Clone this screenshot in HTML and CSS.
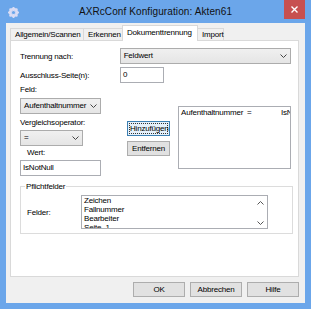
FILE: index.html
```html
<!DOCTYPE html>
<html lang="de">
<head>
    <meta charset="UTF-8">
    <title>AXRcConf Konfiguration: Akten61</title>
    <link rel="stylesheet" href="styles.css">
</head>
<body>
    <div class="window">
        <div class="titlebar">
            <svg class="app-icon" width="11" height="11" viewBox="0 0 11 11">
                <circle cx="5.5" cy="5.5" r="3.6" fill="none" stroke="#d9dcf4" stroke-width="2.2"/>
                <g stroke="#d9dcf4" stroke-width="1.8">
                    <line x1="5.5" y1="0" x2="5.5" y2="11"/>
                    <line x1="0" y1="5.5" x2="11" y2="5.5"/>
                    <line x1="1.6" y1="1.6" x2="9.4" y2="9.4"/>
                    <line x1="9.4" y1="1.6" x2="1.6" y2="9.4"/>
                </g>
                <circle cx="5.5" cy="5.5" r="1.6" fill="#6ba6ea"/>
            </svg>
            <div class="title">AXRcConf Konfiguration: Akten61</div>
            <div class="close">
                <svg width="7" height="7" viewBox="0 0 7 7"><path d="M0.5 0.5 L6.5 6.5 M6.5 0.5 L0.5 6.5" stroke="#fff" stroke-width="1.4"/></svg>
            </div>
        </div>

        <div class="client">
            <div class="tabs">
                <div class="tab tab-1">Allgemein/Scannen</div>
                <div class="tab tab-2">Erkennen</div>
                <div class="tab active">Dokumenttrennung</div>
                <div class="tab tab-4">Import</div>
            </div>

            <div class="panel">
                <div class="row">
                    <span class="lbl">Trennung nach:</span>
                    <div class="combo combo-wide">Feldwert<svg class="chev" width="7" height="4" viewBox="0 0 7 4"><path d="M0.5 0.5 L3.5 3.5 L6.5 0.5" fill="none" stroke="#444" stroke-width="1"/></svg></div>
                </div>
                <div class="row row-2">
                    <span class="lbl">Ausschluss-Seite(n):</span>
                    <div class="input input-small">0</div>
                </div>

                <div class="middle">
                    <div class="left-col">
                        <span class="lbl">Feld:</span>
                        <div class="combo combo-field">Aufenthaltnummer<svg class="chev" width="7" height="4" viewBox="0 0 7 4"><path d="M0.5 0.5 L3.5 3.5 L6.5 0.5" fill="none" stroke="#444" stroke-width="1"/></svg></div>
                        <span class="lbl lbl-op">Vergleichsoperator:</span>
                        <div class="combo combo-op">=<svg class="chev" width="7" height="4" viewBox="0 0 7 4"><path d="M0.5 0.5 L3.5 3.5 L6.5 0.5" fill="none" stroke="#444" stroke-width="1"/></svg></div>
                        <span class="lbl lbl-wert">Wert:</span>
                        <div class="input input-wert">IsNotNull</div>
                    </div>
                    <div class="btn-col">
                        <button class="btn btn-focus"><span class="focus-ring">Hinzufügen</span></button>
                        <button class="btn">Entfernen</button>
                    </div>
                    <div class="list cond-list">
                        <div class="cond-row"><span class="c1">Aufenthaltnummer</span><span class="c2">=</span><span class="c3">IsNotNull</span></div>
                    </div>
                </div>

                <div class="group">
                    <span class="legend">Pflichtfelder</span>
                    <span class="lbl lbl-felder">Felder:</span>
                    <div class="list field-list">
                        <div class="items">
                            <div>Zeichen</div>
                            <div>Fallnummer</div>
                            <div>Bearbeiter</div>
                            <div>Seite_1</div>
                        </div>
                        <div class="scroll">
                            <svg width="7" height="4" viewBox="0 0 7 4"><path d="M0.5 3.5 L3.5 0.5 L6.5 3.5" fill="none" stroke="#555" stroke-width="1"/></svg>
                            <svg width="7" height="4" viewBox="0 0 7 4"><path d="M0.5 0.5 L3.5 3.5 L6.5 0.5" fill="none" stroke="#555" stroke-width="1"/></svg>
                        </div>
                    </div>
                </div>
            </div>

            <div class="footer">
                <button class="btn btn-foot">OK</button>
                <button class="btn btn-foot">Abbrechen</button>
                <button class="btn btn-foot">Hilfe</button>
            </div>
        </div>
    </div>
</body>
</html>
```

FILE: styles.css
```css
* {
    margin: 0;
    padding: 0;
    box-sizing: border-box;
}
body {
    width: 311px;
    height: 309px;
    overflow: hidden;
    font-family: 'Liberation Sans', Arial, sans-serif;
    font-size: 8px;
    letter-spacing: -0.2px;
    color: #000;
}
.window {
    width: 311px;
    height: 309px;
    background: #6ba6ea;
    padding: 0 6px 6px 6px;
    display: flex;
    flex-direction: column;
}
.titlebar {
    height: 23px;
    display: flex;
    align-items: flex-start;
    position: relative;
}
.app-icon {
    margin: 7px 0 0 2px;
}
.title {
    position: absolute;
    left: -6px;
    right: -6px;
    top: 6px;
    text-align: center;
    font-size: 10px;
    letter-spacing: 0.1px;
    color: #111;
}
.close {
    margin-left: auto;
    width: 21px;
    height: 19px;
    background: #c75050;
    display: flex;
    justify-content: center;
    align-items: center;
    position: relative;
}
.client {
    flex: 1;
    background: #f0f0f0;
    padding: 3px 6px 6px 4px;
    display: flex;
    flex-direction: column;
}
.tabs {
    display: flex;
    align-items: flex-end;
    height: 14px;
    position: relative;
    z-index: 1;
}
.tab {
    height: 12px;
    line-height: 11px;
    padding: 0 4px;
    background: #f0f0f0;
    border: 1px solid #d9d9d9;
    border-bottom: none;
    margin-right: -1px;
    white-space: nowrap;
}
.tab-1 { width: 74px; }
.tab-2 { width: 41px; }
.tab-4 { width: 27px; }
.tab.active {
    width: 76px;
    height: 16px;
    line-height: 14px;
    background: #fff;
    margin: 0 -1px -1px -1px;
    z-index: 2;
}
.panel {
    height: 237px;
    background: #fff;
    border: 1px solid #d9d9d9;
    padding: 7px 7px 0 9px;
}
.row {
    display: flex;
    align-items: center;
}
.row-2 {
    margin-top: 3px;
}
.lbl {
    display: block;
    width: 100px;
    line-height: 11px;
    white-space: nowrap;
}
.combo {
    height: 16px;
    border: 1px solid #acacac;
    background: linear-gradient(#f0f0f0, #e5e5e5);
    padding: 0 3px;
    line-height: 14px;
    display: flex;
    align-items: center;
    white-space: nowrap;
}
.chev {
    margin-left: auto;
    flex-shrink: 0;
}
.combo-wide {
    width: 172px;
}
.input {
    height: 16px;
    border: 1px solid #abadb3;
    background: #fff;
    padding: 0 2px;
    line-height: 14px;
}
.input-small {
    width: 44px;
}
.middle {
    display: flex;
    align-items: flex-start;
    margin-top: 1px;
}
.left-col {
    width: 81px;
    display: flex;
    flex-direction: column;
}
.left-col .lbl {
    width: auto;
}
.combo-field {
    width: 81px;
    margin-top: 3px;
}
.lbl-op {
    margin-top: 3px;
}
.combo-op {
    width: 63px;
    margin-top: 2px;
}
.lbl-wert {
    margin-top: 1px;
    padding-left: 7px;
}
.input-wert {
    width: 81px;
    margin-top: 2px;
}
.btn-col {
    display: flex;
    flex-direction: column;
    gap: 5px;
    margin: 37px 0 0 26px;
}
.btn {
    font-family: inherit;
    font-size: 8px;
    letter-spacing: inherit;
    color: #000;
    background: #e1e1e1;
    border: 1px solid #adadad;
    height: 15px;
    width: 43px;
    line-height: 13px;
    padding: 0;
}
.btn-focus {
    border-color: #3c7fb1;
    background: #e5f1fb;
    padding: 1px;
}
.focus-ring {
    display: block;
    height: 11px;
    line-height: 10px;
    border: 1px dotted #333;
}
.list {
    background: #fff;
    border: 1px solid #abadb3;
}
.cond-list {
    width: 114px;
    height: 63px;
    margin: 22px 0 0 8px;
    padding: 1px 2px;
    overflow: hidden;
}
.cond-row {
    display: flex;
    white-space: nowrap;
    line-height: 10px;
}
.c1 { width: 66px; flex-shrink: 0; }
.c2 { width: 34px; flex-shrink: 0; }
.group {
    margin-top: 10px;
    width: 273px;
    height: 48px;
    border: 1px solid #dcdcdc;
    position: relative;
    display: flex;
    align-items: flex-start;
    padding: 0 0 0 6px;
}
.legend {
    position: absolute;
    top: -6px;
    left: 4px;
    background: #fff;
    padding: 0 1px;
    line-height: 11px;
}
.lbl-felder {
    width: 54px;
    margin-top: 20px;
}
.field-list {
    width: 187px;
    height: 34px;
    margin-top: 8px;
    display: flex;
    overflow: hidden;
    padding-left: 2px;
}
.items {
    flex: 1;
    line-height: 9px;
    white-space: nowrap;
}
.scroll {
    width: 14px;
    display: flex;
    flex-direction: column;
    justify-content: space-between;
    align-items: center;
    padding: 5px 0 3px;
}
.footer {
    display: flex;
    justify-content: flex-end;
    gap: 5px;
    margin-top: 5px;
}
.btn-foot {
    width: 52px;
    height: 15px;
}
```
